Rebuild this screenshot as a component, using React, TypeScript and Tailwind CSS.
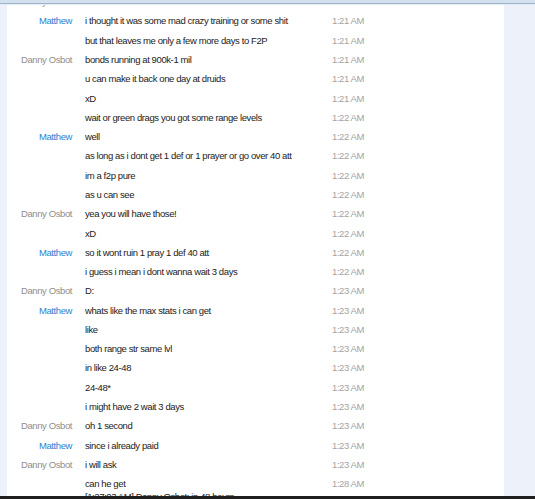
import React from 'react';

// Mensagens do log de chat
type Row = { name?: string; text: string[]; time: string };

const MATT = 'Matthew';
const DANNY = 'Danny Osbot';

const rows: Row[] = [
    { name: DANNY, text: ['xD'], time: '1:21 AM' },
    { name: MATT, text: ['i thought it was some mad crazy training or some shit'], time: '1:21 AM' },
    { text: ['but that leaves me only a few more days to F2P'], time: '1:21 AM' },
    { name: DANNY, text: ['bonds running at 900k-1 mil'], time: '1:21 AM' },
    { text: ['u can make it back one day at druids'], time: '1:21 AM' },
    { text: ['xD'], time: '1:21 AM' },
    { text: ['wait or green drags you got some range levels'], time: '1:22 AM' },
    { name: MATT, text: ['well'], time: '1:22 AM' },
    { text: ['as long as i dont get 1 def or 1 prayer or go over 40 att'], time: '1:22 AM' },
    { text: ['im a f2p pure'], time: '1:22 AM' },
    { text: ['as u can see'], time: '1:22 AM' },
    { name: DANNY, text: ['yea you will have those!'], time: '1:22 AM' },
    { text: ['xD'], time: '1:22 AM' },
    { name: MATT, text: ['so it wont ruin 1 pray 1 def 40 att'], time: '1:22 AM' },
    { text: ['i guess i mean i dont wanna wait 3 days'], time: '1:22 AM' },
    { name: DANNY, text: ['D:'], time: '1:23 AM' },
    { name: MATT, text: ['whats like the max stats i can get'], time: '1:23 AM' },
    { text: ['like'], time: '1:23 AM' },
    { text: ['both range str same lvl'], time: '1:23 AM' },
    { text: ['in like 24-48'], time: '1:23 AM' },
    { text: ['24-48*'], time: '1:23 AM' },
    { text: ['i might have 2 wait 3 days'], time: '1:23 AM' },
    { name: DANNY, text: ['oh 1 second'], time: '1:23 AM' },
    { name: MATT, text: ['since i already paid'], time: '1:23 AM' },
    { name: DANNY, text: ['i will ask'], time: '1:23 AM' },
    { text: ['can he get', '[1:27:03 AM] Danny Osbot: in 48 hours'], time: '1:28 AM' },
];

export default function App() {
    return (
        <div
            className="relative w-[535px] h-[499px] overflow-hidden bg-white text-[9.5px] leading-[13px] tracking-[-0.4px]"
            style={{ fontFamily: '"Liberation Sans", Arial, sans-serif' }}
        >
            <div className="flex h-full">
                {/* faixa esquerda */}
                <div className="w-[7px] bg-[#edf2fa]" />
                {/* lista de mensagens */}
                <div className="flex-1 flex flex-col mt-[-8px]">
                    {rows.map((row, i) => (
                        <div key={i} className="flex py-[3.15px] shrink-0">
                            <div
                                className={
                                    'w-[65px] text-right shrink-0 ' +
                                    (row.name === MATT ? 'text-[#2d7fd2]' : 'text-[#8e8e8e]')
                                }
                            >
                                {row.name ?? ''}
                            </div>
                            <div className="ml-[13px] w-[247px] shrink-0 text-[#222]">
                                {row.text.map((t, j) => (
                                    <div key={j} className="whitespace-nowrap">{t}</div>
                                ))}
                            </div>
                            <div className="text-[#a3a3a3] whitespace-nowrap">{row.time}</div>
                        </div>
                    ))}
                </div>
                {/* faixa direita */}
                <div className="w-[31px] bg-[#edf2fa]" />
            </div>

            {/* borda superior */}
            <div className="absolute left-0 right-0 top-0 h-[5px] bg-[#d3e0ee] border-b border-b-[#e4ecf5]">
                <div className="absolute left-0 right-0 top-[3px] h-px bg-[#9fb4ca]" />
            </div>
            {/* borda inferior */}
            <div className="absolute left-0 right-0 bottom-0 h-[3px] bg-[#1f1f1f]" />
        </div>
    );
}
